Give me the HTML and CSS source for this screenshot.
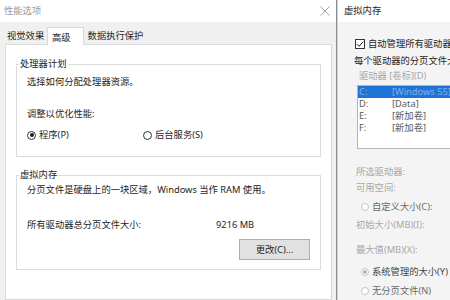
FILE: index.html
```html
<!DOCTYPE html>
<html lang="zh-CN">
<head>
<meta charset="utf-8">
<link rel="stylesheet" href="styles.css">
</head>
<body>
<div class="screen">
  <section class="win left">
    <header class="titlebar">
      <span class="title">性能选项</span>
      <svg class="close" width="10" height="10" viewBox="0 0 10 10"><path d="M0.5 0.5 L9.5 9.5 M9.5 0.5 L0.5 9.5" stroke="#9a9a9a" stroke-width="0.9" fill="none"/></svg>
    </header>
    <div class="dlg">
      <nav class="tabs">
        <span class="tab t1">视觉效果</span>
        <span class="tab sel">高级</span>
        <span class="tab t3">数据执行保护</span>
      </nav>
      <div class="page">
        <fieldset class="grp g1">
          <legend>处理器计划</legend>
          <p class="line l1">选择如何分配处理器资源。</p>
          <p class="line l2">调整以优化性能:</p>
          <div class="radios">
            <span class="radio r1"><span class="dot on"></span>程序(P)</span>
            <span class="radio r2"><span class="dot"></span>后台服务(S)</span>
          </div>
        </fieldset>
        <fieldset class="grp g2">
          <legend>虚拟内存</legend>
          <p class="line l3">分页文件是硬盘上的一块区域，Windows 当作 RAM 使用。</p>
          <div class="total"><span class="tlabel">所有驱动器总分页文件大小:</span><span>9216 MB</span></div>
          <div class="btnrow"><span class="btn">更改(C)...</span></div>
        </fieldset>
      </div>
    </div>
  </section>
  <section class="win right">
    <header class="titlebar rt">
      <span class="title dark">虚拟内存</span>
    </header>
    <div class="vm">
      <div class="chkrow"><span class="chk"><svg width="8" height="8" viewBox="0 0 8 8"><path d="M1 4.2 L3.1 6.3 L7.2 1.6" stroke="#222" stroke-width="1" fill="none"/></svg></span>自动管理所有驱动器的分页文件大小(A)</div>
      <p class="vline v1">每个驱动器的分页文件大小</p>
      <p class="vline v2 dis">驱动器 [卷标](D)</p>
      <div class="list">
        <div class="row selrow"><span class="drv">C:</span><span>[Windows 55]</span></div>
        <div class="row"><span class="drv">D:</span><span>[Data]</span></div>
        <div class="row"><span class="drv">E:</span><span>[新加卷]</span></div>
        <div class="row"><span class="drv">F:</span><span>[新加卷]</span></div>
      </div>
      <p class="vline v3 dis">所选驱动器:</p>
      <p class="vline v4 dis">可用空间:</p>
      <div class="vradio v5"><span class="dot g"></span>自定义大小(C):</div>
      <p class="vline v6 dis">初始大小(MB)(I):</p>
      <p class="vline v7 dis">最大值(MB)(X):</p>
      <div class="vradio v8"><span class="dot g on"></span>系统管理的大小(Y)</div>
      <div class="vradio v9"><span class="dot g"></span>无分页文件(N)</div>
    </div>
  </section>
</div>
</body>
</html>
```

FILE: styles.css
```css
* { box-sizing: border-box; }
html, body { margin: 0; padding: 0; }
body {
  width: 450px;
  height: 300px;
  overflow: hidden;
  background: #f0f0f0;
  font-family: "Noto Sans", "Noto Sans CJK SC", sans-serif;
  font-size: 9.3px;
  line-height: 14px;
  color: #1e1e1e;
}
p { margin: 0; }
.screen {
  display: flex;
  height: 300px;
}
.win {
  display: flex;
  flex-direction: column;
  height: 300px;
  overflow: hidden;
  white-space: nowrap;
}
.left {
  width: 337px;
  flex: none;
  border-right: 1px solid #8a8a8a;
  background: #f0f0f0;
}
.right {
  flex: 1;
  background: #f4f4f4;
  border-left: 1px solid #d6d6d6;
}
.titlebar {
  height: 22px;
  flex: none;
  background: #ffffff;
  display: flex;
  align-items: center;
  justify-content: space-between;
  padding: 0 6px 0 4px;
}
.titlebar.rt { padding-left: 6px; }
.title { color: #9a9a9a; }
.title.dark { color: #1e1e1e; }
.close { display: block; }
.dlg {
  flex: 1;
  display: flex;
  flex-direction: column;
  padding: 0 4px 0 5px;
}
.tabs {
  height: 22px;
  flex: none;
  display: flex;
  align-items: flex-end;
  position: relative;
  z-index: 1;
}
.tab {
  height: 16px;
  line-height: 16px;
  color: #1e1e1e;
}
.t1 { padding: 0 2px 0 2px; width: 42px; }
.tab.sel {
  height: 18px;
  margin-bottom: -1px;
  padding: 2px 12px 0 4px;
  background: #ffffff;
  border: 1px solid #d9d9d9;
  border-bottom: none;
  line-height: 16px;
}
.t3 { padding-left: 4px; }
.page {
  flex: 1;
  background: #ffffff;
  border: 1px solid #d9d9d9;
  padding: 0 10px 0 10px;
}
.grp {
  margin: 12px 0 0 0;
  padding: 0 10px 0 10px;
  border: 1px solid #dcdcdc;
  min-inline-size: 0;
}
.grp legend {
  margin-left: -8px;
  padding: 0 1px;
  line-height: 14px;
}
.g1 { padding-bottom: 14px; }
.l1 { margin-top: 4px; }
.l2 { margin-top: 18px; }
.radios {
  margin-top: 7px;
  display: flex;
  height: 14px;
}
.radio {
  display: flex;
  align-items: center;
}
.r1 { width: 116px; }
.dot {
  width: 9px;
  height: 9px;
  border: 1px solid #333333;
  border-radius: 50%;
  display: inline-flex;
  align-items: center;
  justify-content: center;
  flex: none;
  background: #ffffff;
}
.r1 .dot { margin-right: 3px; }
.r2 .dot { margin-right: 3px; }
.dot.on::after {
  content: "";
  width: 4px;
  height: 4px;
  border-radius: 50%;
  background: #1e1e1e;
}
.g2 { margin-top: 11px; padding-bottom: 9px; }
.l3 { margin-top: 1px; }
.total {
  margin-top: 21px;
  display: flex;
}
.tlabel { width: 189px; }
.btnrow {
  margin-top: 7px;
  display: flex;
  justify-content: flex-end;
  padding-right: 0;
}
.btn {
  width: 71px;
  height: 21px;
  line-height: 19px;
  text-align: center;
  background: #e1e1e1;
  border: 1px solid #adadad;
  color: #1e1e1e;
}

/* right window */
.vm {
  flex: 1;
  padding-left: 16px;
}
.chkrow {
  margin-top: 15px;
  display: flex;
  align-items: center;
  padding-left: 1px;
}
.chk {
  width: 10px;
  height: 10px;
  border: 1px solid #333333;
  background: #ffffff;
  display: inline-flex;
  align-items: center;
  justify-content: center;
  margin-right: 3px;
}
.chk svg { display: block; }
.vline { line-height: 14px; }
.v1 { margin-top: 3px; }
.v2 { margin-top: 1px; padding-left: 5px; }
.dis { color: #a8a8a8; }
.list {
  margin-top: 2px;
  margin-left: 3px;
  height: 64px;
  width: 140px;
  border: 1px solid #b4b4b4;
  background: #ffffff;
}
.row {
  height: 12px;
  line-height: 12px;
  display: flex;
  padding-left: 1px;
  color: #5a5a5a;
}
.selrow {
  background: #1f74d8;
  color: #7fb0ea;
}
.drv { width: 33px; }
.v3 { margin-top: 16px; padding-left: 2px; }
.v4 { margin-top: 2px; padding-left: 2px; }
.vradio {
  display: flex;
  align-items: center;
  height: 14px;
  color: #6a6a6a;
  padding-left: 7px;
}
.dot.g {
  width: 8px;
  height: 8px;
  border-color: #c4c4c4;
  margin-right: 3px;
}
.dot.g.on::after {
  width: 4px;
  height: 4px;
  background: #b8b8b8;
}
.v5 { margin-top: 5px; }
.v6 { margin-top: 4px; padding-left: 2px; }
.v7 { margin-top: 11px; padding-left: 2px; }
.v8 { margin-top: 8px; color: #444444; }
.v9 { margin-top: 5px; }
```
